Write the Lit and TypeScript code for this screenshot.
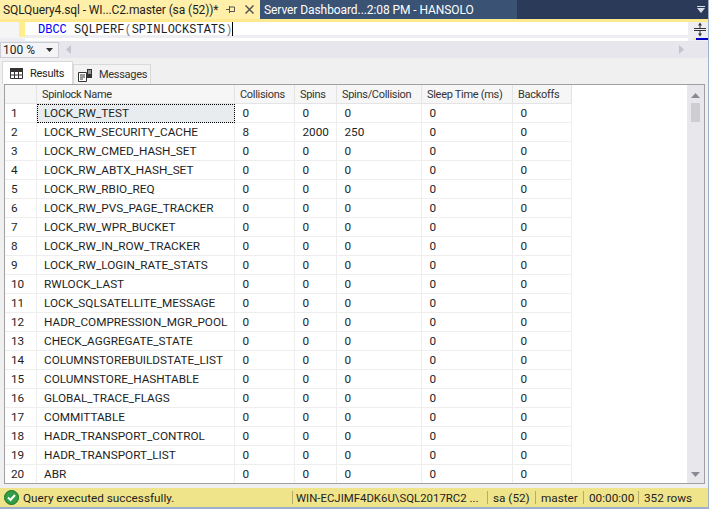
import { LitElement, html, css } from "lit";
import { customElement } from "lit/decorators.js";

const names = ["LOCK_RW_TEST","LOCK_RW_SECURITY_CACHE","LOCK_RW_CMED_HASH_SET","LOCK_RW_ABTX_HASH_SET","LOCK_RW_RBIO_REQ","LOCK_RW_PVS_PAGE_TRACKER","LOCK_RW_WPR_BUCKET","LOCK_RW_IN_ROW_TRACKER","LOCK_RW_LOGIN_RATE_STATS","RWLOCK_LAST","LOCK_SQLSATELLITE_MESSAGE","HADR_COMPRESSION_MGR_POOL","CHECK_AGGREGATE_STATE","COLUMNSTOREBUILDSTATE_LIST","COLUMNSTORE_HASHTABLE","GLOBAL_TRACE_FLAGS","COMMITTABLE","HADR_TRANSPORT_CONTROL","HADR_TRANSPORT_LIST","ABR"];
const cols = ["Collisions","Spins","Spins/Collision","Sleep Time (ms)","Backoffs"];

@customElement("app-root")
export class AppRoot extends LitElement {
  static styles = css`
    :host { display:block; width:709px; height:509px; overflow:hidden; background:#f0f0f0; font-family:Roboto,"Liberation Sans",Arial,sans-serif; font-size:11.75px; color:#1e1e1e; }
    .win { height:509px; display:flex; flex-direction:column; border-right:1px solid #9fb0cc; box-sizing:border-box; }
    .tabs { height:19px; display:flex; background:#2b3a58; flex:none; align-items:stretch; }
    .tab1 { width:260px; background:#ffefa8; display:flex; align-items:center; padding-left:3px; box-sizing:border-box; font-size:12px; letter-spacing:-.12px; }
    .tab1 .t { flex:1; white-space:nowrap; }
    .pin { margin-right:9px; }
    .close { margin-right:6px; }
    .tab2 { width:257px; background:#3a5274; color:#fff; display:flex; align-items:center; padding-left:4px; box-sizing:border-box; white-space:nowrap; font-size:12px; letter-spacing:-.08px; }
    .sp { flex:1; display:flex; justify-content:flex-end; align-items:center; padding-right:3px; }
    .rule { height:3px; background:#ffe98f; flex:none; }
    .editor { height:19px; display:flex; flex:none; background:#eeeef2; }
    .gut { width:25px; flex:none; background:#f5f5f5; display:flex; justify-content:flex-end; height:16px; }
    .gut i { display:block; width:6px; background:#ffee8c; height:15px; }
    .main { flex:1; display:flex; flex-direction:column; justify-content:space-between; }
    .code { background:#fff; font-family:"Liberation Mono",monospace; font-size:12px; padding-left:13px; line-height:14px; white-space:pre; height:13px; box-sizing:border-box; }
    .strip { height:3px; background:#fff; }
    .k { color:#0000ff; } .g { color:#808080; }
    .caret { display:inline-block; width:1px; height:14px; background:#000; vertical-align:-3px; }
    .split { width:18px; flex:none; margin-left:2px; background:#eeeef2; display:block; }
    .zoom { height:17px; display:flex; background:#e6e6ec; flex:none; align-items:center; }
    .zbox { width:59px; height:16px; background:#f4f4f6; border:1px solid #ccced6; box-sizing:border-box; display:flex; align-items:center; justify-content:space-between; padding:1px 5px 0 2px; font-size:12px; }
    .ztrack { flex:1; display:flex; justify-content:space-between; padding:0 24px 0 7px; align-items:center; }
    .rtabs { height:26px; display:flex; flex:none; align-items:flex-end; padding-left:2px; background:#f0f0f0; font-size:11px; letter-spacing:-.3px; }
    .rtab { display:flex; align-items:center; box-sizing:border-box; }
    .rtab.on { width:71px; height:23px; background:#fff; border:1px solid #d9d9d9; border-bottom:0; padding-left:7px; gap:7px; }
    .rtab.off { width:78px; height:20px; background:#f3f3f3; border:1px solid #d9d9d9; border-bottom:0; padding-left:4px; gap:6px; color:#333; }
    .grid { height:398px; flex:none; margin:0 3px 4px 4px; border:1px solid #a0a0a0; background:#fff; display:flex; overflow:hidden; }
    .gridview { flex:1; overflow:hidden; }
    .row { display:grid; grid-template-columns:32px 198px 60px 42px 85px 91px 59px; height:19px; }
    .row > div { border-right:1px solid #eeeeee; border-bottom:1px solid #eeeeee; padding-left:7.5px; line-height:19px; white-space:nowrap; box-sizing:border-box; overflow:hidden; }
    .row > div:first-child { padding-left:6px; }
    .row > div:nth-child(2) { padding-left:7px; }
    .head > div, .row.head > div:nth-child(2) { background:#f6f6f6; border-color:#e4e4e4; color:#333; padding-left:5px; font-size:11px; letter-spacing:-.3px; }
    .row > .sel { outline:1px dotted #000; outline-offset:-1px; background:#e8ecef; }
    .sb { width:17px; flex:none; background:#e8e8ec; display:flex; flex-direction:column; align-items:center; justify-content:space-between; position:relative; padding:8px 0 6px; box-sizing:border-box; }
    .thumb { position:absolute; left:4px; top:18px; width:9px; height:19px; background:#cdcdd2; }
    .status { height:19px; flex:none; background:#f0e48b; display:flex; align-items:center; }
    .msg { width:292px; display:flex; align-items:center; padding-left:4px; gap:4px; box-sizing:border-box; flex:none; font-size:11.75px; }
    .cell { border-left:1px solid #b5ac6a; height:13px; display:flex; align-items:center; padding:0 5px; white-space:nowrap; box-sizing:border-box; flex:none; }
    .c1 { width:195px; padding-left:3px; font-size:11.4px; }
    .c2 { width:48px; }
    .c3 { width:48px; }
    .c4 { width:55px; }
    .foot { flex:1; background:#9fb0cc; }
  `;
  render() {
    return html`<div class="win">
      <div class="tabs">
        <div class="tab1"><span class="t">SQLQuery4.sql - WI...C2.master (sa (52))*</span>
          <svg class="pin" width="10" height="9" viewBox="0 0 10 9"><path d="M0 4.500h3M3.500 1v7M3.500 2h5v4.500h-5M8.500 2v4.500" fill="none" stroke="#555"/></svg>
          <svg class="close" width="9" height="9" viewBox="0 0 9 9"><path d="M.5.500l8 8M8.500.500l-8 8" stroke="#555" stroke-width="1.500"/></svg>
        </div>
        <div class="tab2">Server Dashboard...2:08 PM - HANSOLO</div>
        <div class="sp"><svg width="8" height="8" viewBox="0 0 8 8"><path d="M0 0h8v1H0zM0 2h8L4 7z" fill="#d5dbe8"/></svg></div>
      </div>
      <div class="rule"></div>
      <div class="editor">
        <div class="gut"><i></i></div>
        <div class="main">
          <div class="code"><span class="k">DBCC</span> SQLPERF<span class="g">(</span>SPINLOCKSTATS<span class="g">)</span><span class="caret"></span></div>
          <div class="strip"></div>
        </div>
        <svg class="split" width="18" height="19" viewBox="0 0 18 19"><path d="M4 6.500h12M4 8.500h12M10 3v3M10 9v3" stroke="#333" fill="none"/><path d="M8 3.500l2-3 2 3zM8 11.500l2 3 2-3z" fill="#333"/><path d="M3 16h3v2H3z" fill="#ffe98f"/><path d="M6 16h12v2H6z" fill="#0000c8"/></svg>
      </div>
      <div class="zoom">
        <div class="zbox"><span>100 %</span><svg width="7" height="4" viewBox="0 0 7 4"><path d="M0 0h7L3.500 4z" fill="#333"/></svg></div>
        <div class="ztrack"><svg width="5" height="9" viewBox="0 0 5 9"><path d="M5 0v9L0 4.500z" fill="#c4c4cc"/></svg><svg width="5" height="9" viewBox="0 0 5 9"><path d="M0 0v9l5-4.500z" fill="#c4c4cc"/></svg></div>
      </div>
      <div class="rtabs">
        <div class="rtab on"><svg width="13" height="11" viewBox="0 0 13 11"><path d="M.5.500h12v10H.500zM.5 3.500h12M.5 7h12M4.500.500v10M8.500.500v10" fill="none" stroke="#333"/><path d="M0 0h13v3H0z" fill="#333"/></svg><span>Results</span></div>
        <div class="rtab off"><svg width="15" height="14" viewBox="0 0 15 14"><path d="M.5 4.500h8v9h-8z" fill="#fff" stroke="#333"/><path d="M2 7h5M2 9h5M2 11h3" stroke="#333"/><path d="M9 1h5v9H9z" fill="#333"/><path d="M10 3h3M10 5h3" stroke="#fff"/></svg><span>Messages</span></div>
      </div>
      <div class="grid">
        <div class="gridview">
          <div class="row head"><div></div><div>Spinlock Name</div>${cols.map(c=>html`<div>${c}</div>`)}</div>
          ${names.map((n,i)=>html`<div class="row"><div>${i+1}</div><div class="${i===0?"sel":""}">${n}</div>
            <div>${i===1?"8":"0"}</div><div>${i===1?"2000":"0"}</div><div>${i===1?"250":"0"}</div><div>0</div><div>0</div></div>`)}
        </div>
        <div class="sb"><svg width="9" height="5" viewBox="0 0 9 5"><path d="M0 5h9L4.500 0z" fill="#8a8a94"/></svg><div class="thumb"></div><svg width="9" height="5" viewBox="0 0 9 5"><path d="M0 0h9L4.500 5z" fill="#8a8a94"/></svg></div>
      </div>
      <div class="status">
        <div class="msg"><svg width="15" height="15" viewBox="0 0 15 15"><circle cx="7.500" cy="7.500" r="7" fill="#2f9e44" stroke="#1d6f2d"/><path d="M4 7.500l2.500 2.500 4.500-5" stroke="#fff" stroke-width="2" fill="none"/></svg><span>Query executed successfully.</span></div>
        <div class="cell c1">WIN-ECJIMF4DK6U\\SQL2017RC2 ...</div>
        <div class="cell c2">sa (52)</div>
        <div class="cell c3">master</div>
        <div class="cell c4">00:00:00</div>
        <div class="cell">352 rows</div>
      </div>
      <div class="foot"></div>
    </div>`;
  }
}
